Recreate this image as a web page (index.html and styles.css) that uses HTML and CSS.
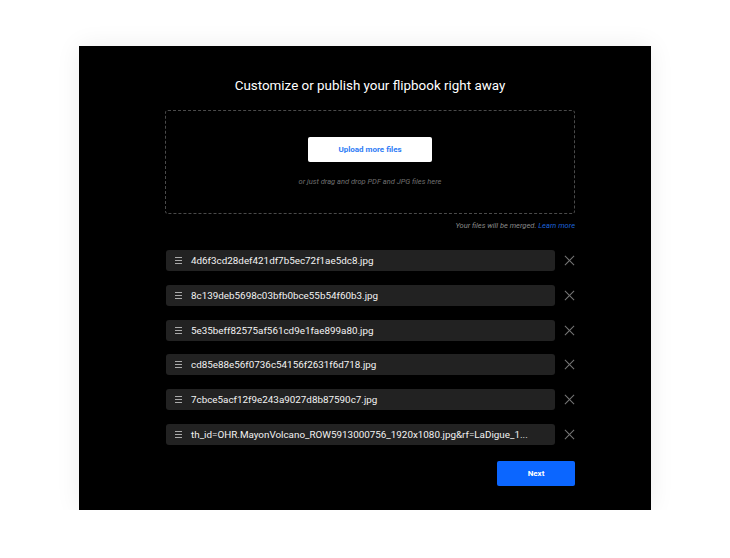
FILE: index.html
```html
<!DOCTYPE html>
<html lang="en">

<head>
    <meta charset="UTF-8">
    <meta name="viewport" content="width=device-width, initial-scale=1.0">
    <title>Customize or publish your flipbook</title>
    <link rel="stylesheet" href="styles.css">
</head>

<body>
    <div class="panel">
        <h2 class="title">Customize or publish your flipbook right away</h2>

        <div class="drop">
            <button class="upload">Upload more files</button>
            <p class="hint">or just drag and drop PDF and JPG files here</p>
        </div>
        <p class="note">Your files will be merged. <a href="#">Learn more</a></p>

        <ul class="files">
            <li class="file">
                <div class="bar"><span class="grip"></span><span class="name">4d6f3cd28def421df7b5ec72f1ae5dc8.jpg</span></div>
                <span class="close"></span>
            </li>
            <li class="file">
                <div class="bar"><span class="grip"></span><span class="name">8c139deb5698c03bfb0bce55b54f60b3.jpg</span></div>
                <span class="close"></span>
            </li>
            <li class="file">
                <div class="bar"><span class="grip"></span><span class="name">5e35beff82575af561cd9e1fae899a80.jpg</span></div>
                <span class="close"></span>
            </li>
            <li class="file">
                <div class="bar"><span class="grip"></span><span class="name">cd85e88e56f0736c54156f2631f6d718.jpg</span></div>
                <span class="close"></span>
            </li>
            <li class="file">
                <div class="bar"><span class="grip"></span><span class="name">7cbce5acf12f9e243a9027d8b87590c7.jpg</span></div>
                <span class="close"></span>
            </li>
            <li class="file">
                <div class="bar"><span class="grip"></span><span class="name">th_id=OHR.MayonVolcano_ROW5913000756_1920x1080.jpg&amp;rf=LaDigue_1...</span></div>
                <span class="close"></span>
            </li>
        </ul>

        <button class="next">Next</button>
    </div>
</body>

</html>
```

FILE: styles.css
```css
body {
    margin: 0;
    background: #fff;
    font-family: Roboto, "Liberation Sans", sans-serif;
}

.panel {
    box-sizing: border-box;
    width: 572px;
    height: 464px;
    margin: 46px 0 0 79px;
    padding: 30px 76px 0 86px;
    background: #000;
    box-shadow: 0 0 24px rgba(0, 0, 0, 0.07);
    display: flex;
    flex-direction: column;
}

.title {
    margin: 0 0 14px;
    font-size: 13.4px;
    font-weight: 400;
    line-height: 20px;
    color: #fff;
    text-align: center;
}

/* drop zone */
.drop {
    height: 104px;
    box-sizing: border-box;
    border: 1px dashed #4a4a4a;
    border-radius: 3px;
    padding-top: 26px;
    display: flex;
    flex-direction: column;
    align-items: center;
}

.upload {
    width: 124px;
    height: 25px;
    border: 0;
    border-radius: 2px;
    background: #fff;
    color: #2e7cf6;
    font-family: inherit;
    font-size: 8px;
    font-weight: 700;
}

.hint {
    margin: 15px 0 0;
    font-size: 7.5px;
    line-height: 10px;
    font-style: italic;
    color: #707070;
}

.note {
    margin: 7px 0 0;
    font-size: 7.5px;
    line-height: 10px;
    font-style: italic;
    color: #8a8a8a;
    text-align: right;
}

.note a {
    color: #1d62d6;
    text-decoration: none;
}

/* file list */
.files {
    list-style: none;
    margin: 19px 0 0;
    padding: 0;
    display: flex;
    flex-direction: column;
    gap: 13.8px;
}

.file {
    display: flex;
    align-items: center;
    gap: 9px;
    padding-left: 1px;
}

.bar {
    flex: 1;
    min-width: 0;
    height: 21px;
    background: #222;
    border-radius: 3px;
    display: flex;
    align-items: center;
    padding: 0 9px;
}

.grip {
    flex: none;
    width: 7px;
    height: 7px;
    margin-right: 9px;
    background: linear-gradient(#aaa 0 1px, transparent 1px 3px, #aaa 3px 4px, transparent 4px 6px, #aaa 6px 7px);
}

.name {
    font-size: 9.85px;
    color: #f2f2f2;
    white-space: nowrap;
}

.close {
    flex: none;
    position: relative;
    width: 11px;
    height: 11px;
}

.close::before,
.close::after {
    content: "";
    position: absolute;
    left: -1px;
    top: 5px;
    width: 13px;
    height: 1px;
    background: #777;
    transform: rotate(45deg);
}

.close::after {
    transform: rotate(-45deg);
}

.next {
    align-self: flex-end;
    margin-top: 16px;
    width: 78px;
    height: 25px;
    border: 0;
    border-radius: 2px;
    background: #0b66ff;
    color: #fff;
    font-family: inherit;
    font-size: 8px;
    font-weight: 700;
}
```
